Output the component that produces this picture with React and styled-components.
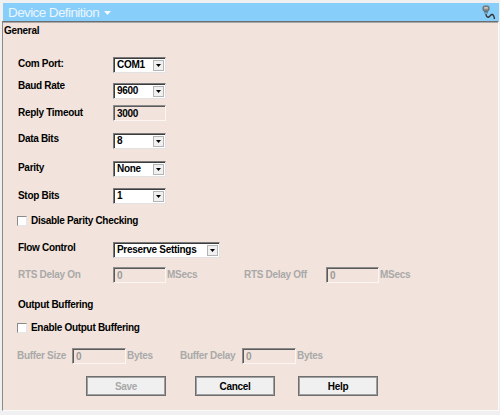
import React from "react";
import styled, { createGlobalStyle } from "styled-components";

const GlobalStyle = createGlobalStyle`
  html, body {
    margin: 0;
    padding: 0;
    background: #f0f0f0;
  }
  body {
    font-family: "Liberation Sans", Arial, sans-serif;
  }
`;

function PlugIcon() {
  return (
    <svg width="15" height="15" viewBox="0 0 15 15">
      <rect x="1" y="1" width="6" height="5" rx="1.5" fill="#8c8c8c" stroke="#5a5a5a" strokeWidth="0.8" />
      <rect x="2.3" y="2.2" width="3.4" height="1.4" fill="#d8d8d8" />
      <path d="M3 6v2.5M5 6v2.5" stroke="#4a4a4a" strokeWidth="1" />
      <path
        d="M4 9c0 3 2 4 3.5 2.5S9 9 10.5 9.5 12 12 12.5 14"
        fill="none"
        stroke="#333"
        strokeWidth="1.4"
      />
    </svg>
  );
}

function Select({ width, value }) {
  return (
    <SelectBox $w={width}>
      <SelectValue>{value}</SelectValue>
      <DropButton>
        <svg width="5" height="3" viewBox="0 0 5 3">
          <path d="M0 0h5L2.5 3z" fill="#000" />
        </svg>
      </DropButton>
    </SelectBox>
  );
}

function Check({ label }) {
  return (
    <CheckRow $mt={10}>
      <CheckBox />
      <Label $w="auto">{label}</Label>
    </CheckRow>
  );
}

export default function App() {
  return (
    <>
      <GlobalStyle />
      <Page>
        <Window>
          <TitleBar>
            <TitleText>
              Device Definition
              <TitleCaret>
                <svg width="7" height="4" viewBox="0 0 7 4">
                  <path d="M0 0h7L3.5 4z" fill="#f4faff" />
                </svg>
              </TitleCaret>
            </TitleText>
            <PlugIcon />
          </TitleBar>
          <Panel>
            <Heading>General</Heading>
            <Form>
              <Row $mt={20}>
                <Label>Com Port:</Label>
                <Select width={53} value="COM1" />
              </Row>
              <Row $mt={6}>
                <Label>Baud Rate</Label>
                <Ctrl $mt={4}>
                  <Select width={53} value="9600" />
                </Ctrl>
              </Row>
              <Row $mt={6}>
                <Label $mt={1}>Reply Timeout</Label>
                <Input $w={53}>3000</Input>
              </Row>
              <Row $mt={11}>
                <Label>Data Bits</Label>
                <Ctrl $mt={1}>
                  <Select width={53} value="8" />
                </Ctrl>
              </Row>
              <Row $mt={12}>
                <Label>Parity</Label>
                <Select width={53} value="None" />
              </Row>
              <Row $mt={11}>
                <Label $mt={1}>Stop Bits</Label>
                <Select width={53} value="1" />
              </Row>
              <Check label="Disable Parity Checking" />
              <Row $mt={14}>
                <Label>Flow Control</Label>
                <Ctrl $mt={1}>
                  <Select width={107} value="Preserve Settings" />
                </Ctrl>
              </Row>
              <Row $mt={9}>
                <Label $mt={1} $disabled>RTS Delay On</Label>
                <Input $w={53} $disabled>0</Input>
                <Suffix $w={77}>MSecs</Suffix>
                <Label $mt={1} $w={82} $disabled>RTS Delay Off</Label>
                <Input $w={53} $disabled>0</Input>
                <Suffix $w={40}>MSecs</Suffix>
              </Row>
              <Row $mt={15}>
                <Label $w="auto">Output Buffering</Label>
              </Row>
              <Check label="Enable Output Buffering" />
              <Row $mt={14} $indent={-1}>
                <Label $mt={1} $w={55} $disabled>Buffer Size</Label>
                <Input $w={54} $disabled>0</Input>
                <Suffix $w={53}>Bytes</Suffix>
                <Label $mt={1} $w={62} $disabled>Buffer Delay</Label>
                <Input $w={54} $disabled>0</Input>
                <Suffix $w={40}>Bytes</Suffix>
              </Row>
              <ButtonRow>
                <Button $disabled>Save</Button>
                <Button $ml={29}>Cancel</Button>
                <Button $ml={23}>Help</Button>
              </ButtonRow>
            </Form>
          </Panel>
        </Window>
      </Page>
    </>
  );
}

const Page = styled.div`
  width: 500px;
  height: 415px;
  box-sizing: border-box;
  padding: 3px 1px 4px 2px;
  display: flex;
  background: #f0f0f0;
  overflow: hidden;
`;

const Window = styled.div`
  flex: 1;
  display: flex;
  flex-direction: column;
`;

const TitleBar = styled.div`
  height: 18px;
  margin-left: 1px;
  background: #87cefa;
  display: flex;
  align-items: center;
  justify-content: space-between;
  padding: 0 2px 0 5px;
`;

const TitleText = styled.div`
  font-family: "Liberation Sans", Arial, sans-serif;
  font-size: 13.5px;
  letter-spacing: -0.6px;
  color: #eaf5fe;
  display: flex;
  align-items: center;
`;

const TitleCaret = styled.span`
  display: flex;
  margin-left: 5px;
  margin-top: 1px;
`;

const Panel = styled.div`
  flex: 1;
  background: #f2e4dc;
  border-top: 1px solid #6e6e6e;
  box-shadow: inset 0 1px 0 #a8a8a8;
  border-left: 1px solid #8a8a8a;
  border-right: 1px solid #fafafa;
  border-bottom: 1px solid #fafafa;
  padding: 0 0 0 15px;
`;

const Heading = styled.div`
  font-size: 10px;
  font-weight: bold;
  letter-spacing: -0.3px;
  line-height: 13px;
  color: #000;
  margin: 2px 0 0 -14px;
`;

const Form = styled.div`
  display: flex;
  flex-direction: column;
`;

const Row = styled.div`
  display: flex;
  align-items: flex-start;
  margin-top: ${(p) => p.$mt || 0}px;
  margin-left: ${(p) => p.$indent || 0}px;
`;

const CheckRow = styled.div`
  display: flex;
  align-items: center;
  height: 13px;
  margin-top: ${(p) => p.$mt || 0}px;
  margin-left: -1px;
`;

const Label = styled.div`
  width: ${(p) => (typeof p.$w === "number" ? `${p.$w}px` : p.$w || "95px")};
  flex-shrink: 0;
  font-size: 10px;
  font-weight: bold;
  letter-spacing: -0.3px;
  line-height: 13px;
  white-space: nowrap;
  margin-top: ${(p) => p.$mt || 0}px;
  color: ${(p) => (p.$disabled ? "#a9a9a9" : "#000")};
`;

const Ctrl = styled.div`
  margin-top: ${(p) => p.$mt || 0}px;
`;

const SelectBox = styled.div`
  width: ${(p) => p.$w}px;
  height: 16px;
  box-sizing: border-box;
  background: #fff;
  border-top: 1px solid #7a7a7a;
  border-left: 1px solid #7a7a7a;
  border-right: 1px solid #e2e2e2;
  border-bottom: 1px solid #e2e2e2;
  box-shadow: inset 1px 1px 0 #3c3c3c;
  display: flex;
  align-items: center;
  justify-content: space-between;
  padding: 0 1px 0 3px;
`;

const SelectValue = styled.span`
  font-size: 10px;
  font-weight: bold;
  letter-spacing: -0.3px;
  line-height: 12px;
  color: #000;
  white-space: nowrap;
`;

const DropButton = styled.div`
  width: 11px;
  height: 11px;
  box-sizing: border-box;
  background: #f0f0f0;
  border: 1px solid #b4b4b4;
  display: flex;
  align-items: center;
  justify-content: center;
`;

const Input = styled.div`
  width: ${(p) => p.$w}px;
  height: 16px;
  box-sizing: border-box;
  flex-shrink: 0;
  background: #f2e4dc;
  border-top: 1px solid #8c8c8c;
  border-left: 1px solid #8c8c8c;
  border-right: 1px solid #fbf6f3;
  border-bottom: 1px solid #fbf6f3;
  box-shadow: inset 1px 1px 0 #5a5a5a;
  padding: 1px 0 0 3px;
  font-size: 10px;
  font-weight: bold;
  letter-spacing: -0.3px;
  line-height: 13px;
  color: ${(p) => (p.$disabled ? "#9a9a9a" : "#000")};
`;

const Suffix = styled.div`
  width: ${(p) => p.$w}px;
  flex-shrink: 0;
  font-size: 10px;
  font-weight: bold;
  letter-spacing: -0.3px;
  line-height: 13px;
  margin: 1px 0 0 1px;
  color: #a9a9a9;
`;

const CheckBox = styled.div`
  width: 10px;
  height: 10px;
  box-sizing: border-box;
  background: #fff;
  border-top: 1px solid #8a8a8a;
  border-left: 1px solid #8a8a8a;
  border-right: 1px solid #e6e6e6;
  border-bottom: 1px solid #e6e6e6;
  margin-right: 4px;
`;

const ButtonRow = styled.div`
  display: flex;
  margin: 12px 0 0 68px;
`;

const Button = styled.div`
  width: 80px;
  height: 20px;
  box-sizing: border-box;
  margin-left: ${(p) => p.$ml || 0}px;
  background: #f0f0f0;
  border: 1px solid #6e6e6e;
  box-shadow: inset 0 0 0 1px #a0a0a0;
  display: flex;
  align-items: center;
  justify-content: center;
  font-size: 10px;
  font-weight: bold;
  letter-spacing: -0.3px;
  color: ${(p) => (p.$disabled ? "#a9a9a9" : "#000")};
`;
